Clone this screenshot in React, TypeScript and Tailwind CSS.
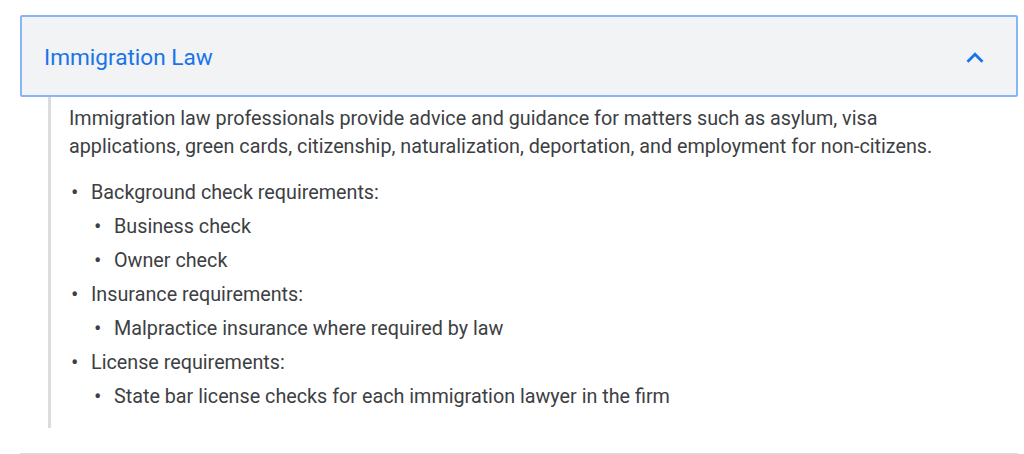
const sections = [
  {
    title: 'Background check requirements:',
    items: ['Business check', 'Owner check'],
  },
  {
    title: 'Insurance requirements:',
    items: ['Malpractice insurance where required by law'],
  },
  {
    title: 'License requirements:',
    items: ['State bar license checks for each immigration lawyer in the firm'],
  },
];

function Bullet({ children }: { children: React.ReactNode }) {
  return (
    <div className="flex leading-[34px]">
      <span className="w-[22px] pl-[2px] shrink-0 text-[22px]">•</span>
      <span>{children}</span>
    </div>
  );
}

export default function App() {
  return (
    <div className="w-[1024px] h-[454px] bg-white overflow-hidden font-['Roboto',sans-serif] pl-[20px] pr-[6px] pt-[15px]">
      {/* Accordion header */}
      <div className="h-[82px] flex items-center justify-between border-2 border-[#8ab4f8] rounded-[2px] bg-[#f1f3f4] pl-[22px] pr-[24px] pt-[4px]">
        <span className="text-[22.6px] text-[#1a73e8]">Immigration Law</span>
        <svg viewBox="0 0 24 24" className="w-[34px] h-[34px]" fill="#1a73e8">
          <path d="M12 8l-6 6 1.41 1.41L12 10.83l4.59 4.58L18 14z" />
        </svg>
      </div>

      {/* Panel body */}
      <div className="ml-[28px] border-l-[3px] border-[#dadce0] pl-[18px] pt-[8px] pb-[14px] text-[19.75px] text-[#3c4043]">
        <p className="leading-[28px] max-w-[880px]">
          Immigration law professionals provide advice and guidance for matters such as asylum, visa
          applications, green cards, citizenship, naturalization, deportation, and employment for non-citizens.
        </p>
        <div className="mt-[15px]">
          {sections.map((s) => (
            <div key={s.title}>
              <Bullet>{s.title}</Bullet>
              <div className="pl-[23px]">
                {s.items.map((it) => (
                  <Bullet key={it}>{it}</Bullet>
                ))}
              </div>
            </div>
          ))}
        </div>
      </div>

      <div className="mt-[25px] border-t border-[#dadce0]" />
    </div>
  );
}
